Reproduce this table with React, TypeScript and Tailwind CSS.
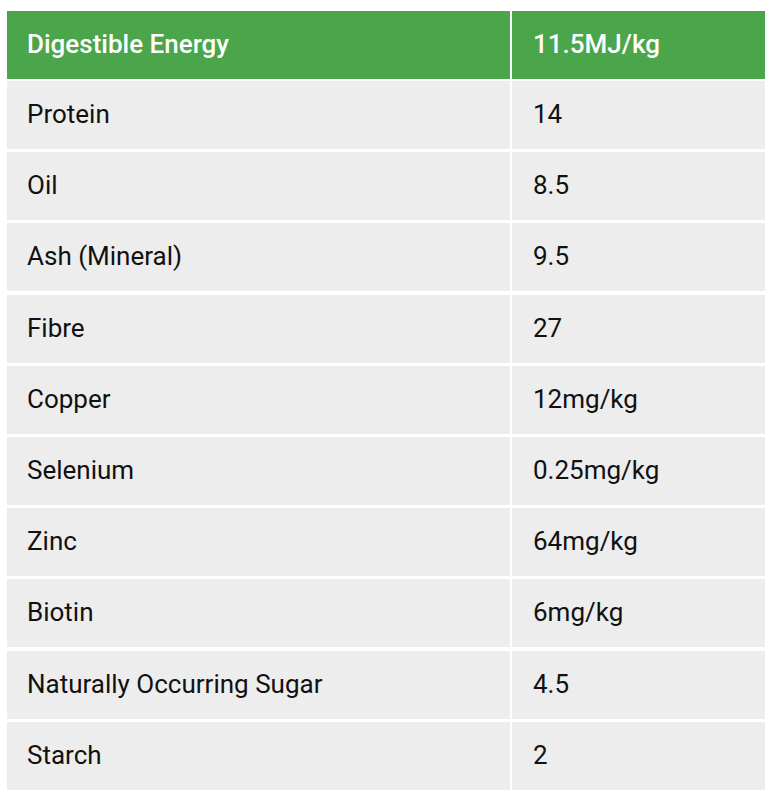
const rows: [string, string][] = [
  ["Protein", "14"],
  ["Oil", "8.5"],
  ["Ash (Mineral)", "9.5"],
  ["Fibre", "27"],
  ["Copper", "12mg/kg"],
  ["Selenium", "0.25mg/kg"],
  ["Zinc", "64mg/kg"],
  ["Biotin", "6mg/kg"],
  ["Naturally Occurring Sugar", "4.5"],
  ["Starch", "2"],
]

export default function App() {
  return (
    <div className="min-h-screen bg-white pt-[11px] pl-[7px] font-['Roboto',sans-serif] text-[26px] leading-none">
      <div className="w-[758px]">
        <div className="grid grid-cols-[503px_253px] gap-x-[2px] mb-[2px]">
          <div className="h-[68px] bg-[#4ba54a] flex items-center pl-[20px] pb-[2px] text-white font-medium">
            Digestible Energy
          </div>
          <div className="h-[68px] bg-[#4ba54a] flex items-center pl-[21px] pb-[2px] text-white font-medium">
            11.5MJ/kg
          </div>
        </div>
        <div className="flex flex-col gap-y-[3.2px]">
          {rows.map(([name, value]) => (
            <div key={name} className="grid grid-cols-[503px_253px] gap-x-[2px]">
              <div className="h-[68px] bg-[#ededed] flex items-center pl-[20px] pb-[2px] text-[#111]">{name}</div>
              <div className="h-[68px] bg-[#ededed] flex items-center pl-[21px] pb-[2px] text-[#111]">{value}</div>
            </div>
          ))}
        </div>
      </div>
    </div>
  )
}
